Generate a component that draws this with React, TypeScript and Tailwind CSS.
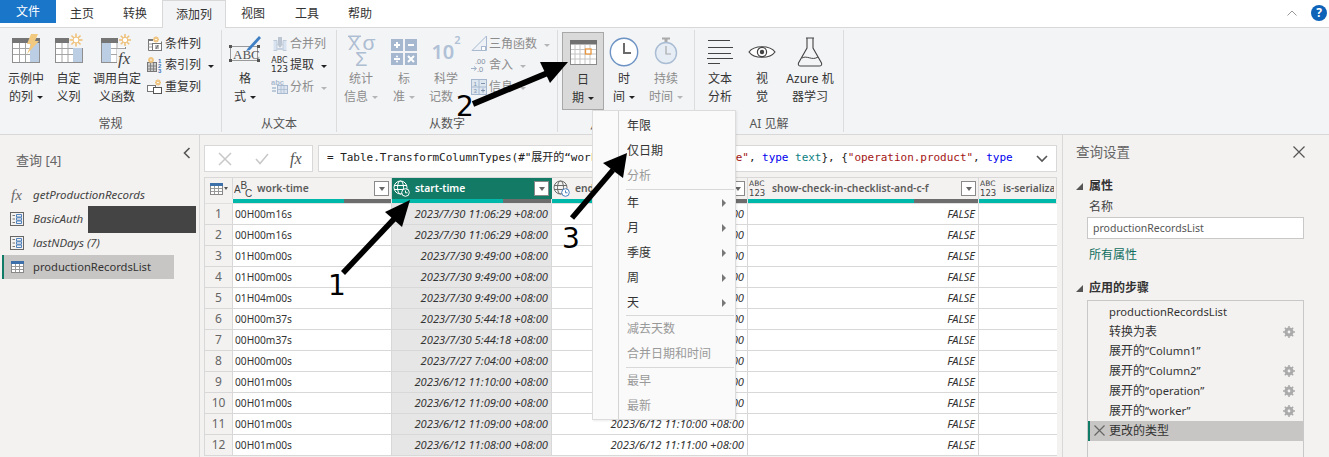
import type { FC, ReactNode } from "react";

const Caret: FC<{ light?: boolean }> = ({ light }) => (
  <span
    className={`inline-block ml-[4px] align-middle border-x-[3px] border-t-[3px] border-x-transparent ${
      light ? "border-t-[#b5b5b5]" : "border-t-[#222]"
    }`}
  />
);

const Sun: FC<{ cx: number; cy: number; r?: number }> = ({ cx, cy, r = 6 }) => (
  <g stroke="#efc27a" strokeWidth="1.6">
    <line x1={cx - r} y1={cy} x2={cx + r} y2={cy} />
    <line x1={cx} y1={cy - r} x2={cx} y2={cy + r} />
    <line x1={cx - r * 0.7} y1={cy - r * 0.7} x2={cx + r * 0.7} y2={cy + r * 0.7} />
    <line x1={cx - r * 0.7} y1={cy + r * 0.7} x2={cx + r * 0.7} y2={cy - r * 0.7} />
    <circle cx={cx} cy={cy} r={r * 0.45} fill="#fff" strokeWidth="1" />
  </g>
);

const ExampleIcon = () => (
  <svg width="32" height="32" viewBox="0 0 32 32" className="mb-[7px]">
    <rect x="2.5" y="6.5" width="27" height="24" fill="#fff" stroke="#8f8f8f" />
    <rect x="20" y="7" width="9" height="23" fill="#bccee4" />
    <rect x="2" y="6" width="28" height="5" fill="#757575" />
    <path d="M3 16.5H20M3 22.5H20M9.5 11V30M15.5 11V30" stroke="#a5a5a5" />
    <path d="M21 2L28 2L25 9L29 9L17 22L21 12L17 12Z" fill="#f1ca80" />
  </svg>
);

const CustomIcon = () => (
  <svg width="30" height="32" viewBox="0 0 30 32" className="mb-[7px]">
    <rect x="1.5" y="6.5" width="27" height="24" fill="#fff" stroke="#8f8f8f" />
    <rect x="19" y="7" width="9" height="23" fill="#bccee4" />
    <rect x="1" y="6" width="18" height="5" fill="#757575" />
    <path d="M2 16.5H19M2 22.5H19M8 11V30M14 11V30" stroke="#a5a5a5" />
    <rect x="15" y="1" width="15" height="15" fill="#f3f4f6" />
    <Sun cx={22} cy={8} r={6.5} />
  </svg>
);

const InvokeIcon = () => (
  <svg width="34" height="34" viewBox="0 0 34 34" className="mb-[5px] overflow-visible">
    <rect x="1.5" y="6.5" width="24" height="24" fill="#fff" stroke="#8f8f8f" />
    <rect x="2" y="11" width="9" height="19" fill="#bccee4" />
    <rect x="1" y="6" width="25" height="5" fill="#757575" />
    <path d="M11 16.5H25M11 22.5H25M17 11V30" stroke="#a5a5a5" />
    <rect x="18" y="1" width="15" height="14" fill="#f3f4f6" />
    <Sun cx={25} cy={8} r={6} />
    <rect x="17" y="17" width="17" height="17" fill="#f3f4f6" />
    <text x="18" y="32" fontFamily="Liberation Serif" fontStyle="italic" fontSize="17" fill="#444">
      fx
    </text>
  </svg>
);

const CondIcon = () => (
  <svg width="16" height="16" viewBox="0 0 16 16">
    <path d="M1.5 3.5V14.5H14.5V5.5" fill="#fff" stroke="#777" />
    <rect x="1" y="3" width="5" height="2" fill="#777" />
    <Sun cx={9} cy={3.5} r={3} />
    <rect x="5.5" y="7.5" width="9" height="7" fill="#fff" stroke="#777" />
    <path d="M8 10H12M8 12H12M11 9L9 13" stroke="#555" strokeWidth=".8" />
    <path d="M1.5 8H5M1.5 11H5" stroke="#999" />
  </svg>
);

const IndexIcon = () => (
  <svg width="18" height="18" viewBox="0 0 18 18">
    <rect x="1.5" y="6.5" width="9" height="9" fill="#ccc" stroke="#777" />
    <path d="M4.5 7V15M7.5 7V15M2 10H10M2 13H10" stroke="#777" strokeWidth=".8" />
    <Sun cx={5} cy={4} r={3} />
    <text x="12" y="7" fontSize="6" fontWeight="700" fill="#3e76ba" fontFamily="Liberation Sans">1</text>
    <text x="12" y="12" fontSize="6" fontWeight="700" fill="#3e76ba" fontFamily="Liberation Sans">2</text>
    <text x="12" y="17" fontSize="6" fontWeight="700" fill="#3e76ba" fontFamily="Liberation Sans">3</text>
  </svg>
);

const DupIcon = () => (
  <svg width="17" height="16" viewBox="0 0 17 16">
    <rect x="1.5" y="6.5" width="8" height="6" fill="#fff" stroke="#777" />
    <rect x="7.5" y="8.5" width="8" height="6" fill="#fff" stroke="#555" />
    <Sun cx={12} cy={3.5} r={3} />
  </svg>
);

const FormatIcon = () => (
  <svg width="34" height="28" viewBox="0 0 34 28" className="mb-[7px]">
    <rect x="2.5" y="12.5" width="27" height="14" fill="none" stroke="#999" />
    <path d="M1 11h3v3H1zM29 11h3v3h-3zM1 25h3v3H1zM29 25h3v3h-3z" fill="#555" />
    <text x="5" y="25" fontFamily="Liberation Serif" fontSize="13" fill="#555">
      ABC
    </text>
    <path d="M20 14L31 2L33 4L22 16L18 17Z" fill="#3f7fc4" />
  </svg>
);

const MergeIcon = () => (
  <svg width="16" height="16" viewBox="0 0 16 16">
    <path d="M1.5 4.5H5V14.5H1.5M14.5 4.5H11V14.5H14.5" fill="#d9e3ef" stroke="#bcc9d9" />
    <rect x="6" y="1" width="4" height="8" fill="#bcc6d2" />
    <path d="M5 8L8 12L11 8Z" fill="#bcc6d2" />
    <rect x="5" y="12" width="6" height="2" fill="#c5d1de" />
  </svg>
);

const ParseIcon = () => (
  <svg width="17" height="17" viewBox="0 0 17 17">
    <text x="0" y="7" fontSize="7.5" fill="#a9bad0" fontFamily="Liberation Sans" fontWeight="700">abc</text>
    <rect x="6.5" y="7.5" width="10" height="8" fill="#dbe4ef" stroke="#a9bad0" />
    <path d="M10 8V15M13 8V15M7 11.5H16" stroke="#a9bad0" strokeWidth=".8" />
    <path d="M1 10H5M1 13H5" stroke="#a9bad0" strokeWidth="1.5" />
  </svg>
);

const StatsIcon = () => (
  <svg width="30" height="32" viewBox="0 0 30 32" className="mb-[2px] ml-[1px] overflow-visible">
    <g fill="#adbdd2" fontFamily="Liberation Sans">
      <rect x="1" y="0.5" width="13" height="1.5" />
      <text x="1" y="15" fontSize="18">X</text>
      <text x="15.5" y="15" fontSize="21">σ</text>
      <text x="8" y="31" fontSize="20">Σ</text>
    </g>
  </svg>
);

const StdIcon = () => (
  <svg width="26" height="26" viewBox="0 0 26 26">
    <rect x="0" y="0" width="12" height="12" fill="#a6b8cf" />
    <rect x="14" y="0" width="12" height="12" fill="#a6b8cf" />
    <rect x="0" y="14" width="12" height="12" fill="#a6b8cf" />
    <rect x="14" y="14" width="12" height="12" fill="#a6b8cf" />
    <path d="M3 6H9M6 3V9M17 6H23M3 20H9M17 17L23 23M23 17L17 23" stroke="#fff" strokeWidth="2" />
    <circle cx="6" cy="17.5" r="1" fill="#fff" />
    <circle cx="6" cy="22.5" r="1" fill="#fff" />
  </svg>
);

const TrigIcon = () => (
  <svg width="16" height="17" viewBox="0 0 16 17">
    <path d="M1 15.5L15.5 1V15.5Z" fill="#eef1f5" stroke="#a9bad0" />
    <rect x="10.5" y="11.5" width="4" height="4" fill="#fff" stroke="#a9bad0" />
  </svg>
);

const RoundIcon = () => (
  <svg width="17" height="16" viewBox="0 0 17 16">
    <text x="5" y="7" fontSize="7.5" fill="#7f8ea3" fontFamily="Liberation Sans">.00</text>
    <text x="7" y="15" fontSize="7.5" fill="#7f8ea3" fontFamily="Liberation Sans">.0</text>
    <path d="M1 11.5H6M4 9.5L6.5 11.5L4 13.5" stroke="#9fb1c8" fill="none" />
  </svg>
);

const InfoIcon = () => (
  <svg width="16" height="16" viewBox="0 0 16 16">
    <rect x=".5" y=".5" width="15" height="15" fill="#dee6f0" stroke="#a6b8cf" />
    <path d="M8 1V15M1 8H15" stroke="#a6b8cf" />
    <path d="M10 4.5H14M10 11.5H14M12 9.5V13.5" stroke="#7f93ad" />
    <text x="2.5" y="7" fontSize="6" fill="#7f93ad" fontFamily="Liberation Sans">1</text>
    <text x="2.5" y="14" fontSize="6" fill="#7f93ad" fontFamily="Liberation Sans">3</text>
  </svg>
);

const DateIcon = () => (
  <svg width="27" height="25" viewBox="0 0 27 25">
    <rect x=".5" y=".5" width="26" height="24" fill="#fff" stroke="#8a8a8a" />
    <rect x="0" y="0" width="27" height="4.5" fill="#707070" />
    <path d="M5 5V24M10 5V24M15 5V24M20 5V24M1 9.5H26M1 14H26M1 19H26" stroke="#c4c4c4" />
    <rect x="15.5" y="9" width="5.5" height="5" fill="#fff" stroke="#e8963e" strokeWidth="1.3" />
  </svg>
);

const ClockIcon = () => (
  <svg width="30" height="30" viewBox="0 0 30 30">
    <circle cx="15" cy="15" r="13.7" fill="#fff" stroke="#6c93c4" strokeWidth="1.4" />
    <path d="M15 6V16H22" fill="none" stroke="#6b6b6b" strokeWidth="2" />
  </svg>
);

const StopwatchIcon = () => (
  <svg width="24" height="30" viewBox="0 0 24 30">
    <rect x="8" y="0.5" width="8" height="2" fill="#aaa" />
    <rect x="10.5" y="2" width="3" height="3" fill="#aaa" />
    <circle cx="12" cy="16" r="10.5" fill="#e6edf5" stroke="#a9bcd3" strokeWidth="1.4" />
    <path d="M12 9V17H17" fill="none" stroke="#a8a8a8" strokeWidth="1.2" />
  </svg>
);

const TextAnalyticsIcon = () => (
  <svg width="27" height="24" viewBox="0 0 27 24">
    <path d="M1 .5H23M1 7.5H26M1 13.5H24M0 18.5H26M1 23.5H13" stroke="#444" strokeWidth="1" />
  </svg>
);

const EyeIcon = () => (
  <svg width="28" height="16" viewBox="0 0 28 16">
    <path d="M1 8C6 1 22 1 27 8C22 15 6 15 1 8Z" fill="#fff" stroke="#444" strokeWidth="1.2" />
    <circle cx="14" cy="8" r="4.6" fill="#fff" stroke="#444" strokeWidth="1.2" />
    <circle cx="14" cy="8" r="2.2" fill="#444" />
  </svg>
);

const FlaskIcon = () => (
  <svg width="26" height="30" viewBox="0 0 26 30">
    <path d="M9 1H17M10 1V11L1.5 26C0.8 28 2 29 3.5 29H22.5C24 29 25.2 28 24.5 26L16 11V1" fill="none" stroke="#444" strokeWidth="1.1" />
    <path d="M5 21C10 18 15 24 21 20" fill="none" stroke="#444" strokeWidth="1" />
  </svg>
);

const RibbonBig: FC<{
  icon: ReactNode;
  lines: [string, string];
  disabled?: boolean;
  caret?: boolean;
  className: string;
  active?: boolean;
}> = ({ icon, lines, disabled, caret, className, active }) => (
  <div
    className={`flex flex-col items-center shrink-0 h-[78px] ${className} ${
      active ? "bg-[#d9d9d9] border border-[#a8a8a8]" : ""
    }`}
  >
    <div className={`flex items-center justify-center h-[37px] ${active ? "mt-[1px]" : "mt-[2px]"}`}>{icon}</div>
    <div
      className={`text-center text-[12px] leading-[18px] whitespace-nowrap ${
        disabled ? "text-[#8c8c8c]" : "text-[#333]"
      }`}
    >
      <div>{lines[0]}</div>
      <div>
        {lines[1]}
        {caret && <Caret light={disabled} />}
      </div>
    </div>
  </div>
);

const RibbonSmall: FC<{ icon: ReactNode; label: string; disabled?: boolean; caret?: boolean }> = ({
  icon,
  label,
  disabled,
  caret,
}) => (
  <div className="flex items-center h-[21.5px] whitespace-nowrap">
    <div className="w-[19px] flex justify-center shrink-0">{icon}</div>
    <span className={`ml-[1px] text-[12px] ${disabled ? "text-[#8c8c8c]" : "text-[#333]"}`}>{label}</span>
    {caret && <span className="ml-[3px]"><Caret light={disabled} /></span>}
  </div>
);

const RibbonGroup: FC<{ label: string; className: string; children: ReactNode }> = ({
  label,
  className,
  children,
}) => (
  <div className={`flex flex-col shrink-0 border-r border-[#dcdcdc] h-[102px] mt-[2px] ${className}`}>
    <div className="flex h-[80px] pt-[1px]">{children}</div>
    <div className="text-center text-[12px] text-[#555] leading-[18px] mt-[6px]">{label}</div>
  </div>
);

const Ribbon = () => (
  <div className="flex h-[107px] bg-[#f3f4f6] border-b border-[#d8d8d8]">
    <RibbonGroup label="常规" className="w-[222px]">
      <RibbonBig className="w-[44px] ml-[4px]" icon={<ExampleIcon />} lines={["示例中", "的列"]} caret />
      <RibbonBig className="w-[41px]" icon={<CustomIcon />} lines={["自定", "义列"]} />
      <RibbonBig className="w-[56px]" icon={<InvokeIcon />} lines={["调用自定", "义函数"]} />
      <div className="flex flex-col pt-[2px]">
        <RibbonSmall icon={<CondIcon />} label="条件列" />
        <RibbonSmall icon={<IndexIcon />} label="索引列" caret />
        <RibbonSmall icon={<DupIcon />} label="重复列" />
      </div>
    </RibbonGroup>
    <RibbonGroup label="从文本" className="w-[115px]">
      <RibbonBig className="w-[46px]" icon={<FormatIcon />} lines={["格", "式"]} caret />
      <div className="flex flex-col ml-[2px] pt-[2px]">
        <RibbonSmall icon={<MergeIcon />} label="合并列" disabled />
        <RibbonSmall
          icon={
            <div className="text-[9px] leading-[9px] text-[#333] text-center font-['DejaVu_Sans',sans-serif]">
              <div className="text-[8px]">ABC</div>
              <div>123</div>
            </div>
          }
          label="提取"
          caret
        />
        <RibbonSmall icon={<ParseIcon />} label="分析" disabled caret />
      </div>
    </RibbonGroup>
    <RibbonGroup label="从数字" className="w-[221px]">
      <RibbonBig className="w-[44px] ml-[2px]" icon={<StatsIcon />} lines={["统计", "信息"]} disabled caret />
      <RibbonBig className="w-[42px]" icon={<StdIcon />} lines={["标", "准"]} disabled caret />
      <RibbonBig
        className="w-[42px]"
        icon={
          <div className="text-[20px] font-semibold text-[#b0c1d6] leading-none">
            10<sup className="text-[11px] align-[9px]">2</sup>
          </div>
        }
        lines={["科学", "记数"]}
        disabled
        caret
      />
      <div className="flex flex-col pt-[2px] ml-[2px]">
        <RibbonSmall icon={<TrigIcon />} label="三角函数" disabled caret />
        <RibbonSmall icon={<RoundIcon />} label="舍入" disabled caret />
        <RibbonSmall icon={<InfoIcon />} label="信息" disabled caret />
      </div>
    </RibbonGroup>
    <RibbonGroup label="从日期和时间" className="w-[137px]">
      <RibbonBig className="w-[42px] ml-[4px] mt-[1px]" icon={<DateIcon />} lines={["日", "期"]} caret active />
      <RibbonBig className="w-[40px]" icon={<ClockIcon />} lines={["时", "间"]} caret />
      <RibbonBig className="w-[44px]" icon={<StopwatchIcon />} lines={["持续", "时间"]} disabled caret />
    </RibbonGroup>
    <RibbonGroup label="AI 见解" className="w-[149px]">
      <RibbonBig className="w-[50px]" icon={<TextAnalyticsIcon />} lines={["文本", "分析"]} />
      <RibbonBig className="w-[34px]" icon={<EyeIcon />} lines={["视", "觉"]} />
      <RibbonBig className="w-[62px]" icon={<FlaskIcon />} lines={["Azure 机", "器学习"]} />
    </RibbonGroup>
  </div>
);

const TABS = [
  { label: "主页", w: "w-[52px]" },
  { label: "转换", w: "w-[54px]" },
  { label: "添加列", w: "w-[64px]", active: true },
  { label: "视图", w: "w-[54px]" },
  { label: "工具", w: "w-[54px]" },
  { label: "帮助", w: "w-[52px]" },
];

const TabBar = () => (
  <div className="flex h-[28px] items-end bg-white border-b border-[#d8d8d8]">
    <div className="w-[56px] h-[23px] mb-[4px] bg-[#1a76c9] text-white text-[12px] leading-[23px] text-center">
      文件
    </div>
    {TABS.map((t) => (
      <div
        key={t.label}
        className={`${t.w} h-[27px] text-[12px] text-center leading-[27px] text-[#333] ${
          t.active ? "bg-[#f3f4f6] border-x border-t border-[#d8d8d8] mb-[-1px] h-[28px]" : ""
        }`}
      >
        {t.label}
      </div>
    ))}
    <div className="flex-1 flex items-center justify-end h-[27px] pr-[2px] gap-[14px] pb-[1px]">
      <svg width="10" height="6" viewBox="0 0 10 6">
        <path d="M.5 5.5L5 1L9.5 5.5" fill="none" stroke="#999" />
      </svg>
      <div className="w-[16px] h-[16px] rounded-full bg-[#0e62b8] text-white text-[12px] font-bold leading-[16px] text-center">
        ?
      </div>
    </div>
  </div>
);

const MiniTable: FC = () => (
  <svg width="13" height="12" viewBox="0 0 13 12">
    <rect x=".5" y=".5" width="12" height="11" fill="#fff" stroke="#888" />
    <rect x="0" y="0" width="13" height="3" fill="#3d6fa8" />
    <path d="M4.5 3V11M8.5 3V11M1 5.5H12M1 8.5H12" stroke="#999" />
  </svg>
);

const ParamIcon = () => (
  <svg width="14" height="14" viewBox="0 0 14 14">
    <rect x=".5" y=".5" width="13" height="13" fill="none" stroke="#666" />
    <path d="M2.5 3.5H5M2.5 7H5M2.5 10.5H5" stroke="#777" />
    <path d="M6.5 2.5H11.5V5H6.5ZM6.5 5.8H11.5V8.2H6.5ZM6.5 9H11.5V11.5H6.5Z" fill="none" stroke="#3d76b8" strokeWidth=".9" />
  </svg>
);

const QUERIES = [
  { label: "getProductionRecords", icon: <span className="font-['Liberation_Serif',serif] italic text-[15px] text-[#666]">fx</span> },
  { label: "BasicAuth", icon: <ParamIcon />, masked: true },
  { label: "lastNDays (7)", icon: <ParamIcon /> },
];

const QueryPanel = () => (
  <div className="w-[200px] shrink-0 border-r border-[#d8d8d8] pt-[13px]">
    <div className="flex items-center justify-between pl-[16px] pr-[8px] h-[26px]">
      <span className="text-[13px] text-[#666]">查询 [4]</span>
      <svg width="8" height="12" viewBox="0 0 8 12" className="mb-[16px]">
        <path d="M6.5 1L1.5 6L6.5 11" fill="none" stroke="#555" strokeWidth="1.6" />
      </svg>
    </div>
    <div className="mt-[9px]">
      {QUERIES.map((q) => (
        <div key={q.label} className="flex items-center h-[24px] pl-[2px] w-[196px]">
          <div className="w-[31px] flex justify-center pr-[2px]">{q.icon}</div>
          <span className="italic text-[11.5px] text-[#444] whitespace-nowrap">{q.label}</span>
          {q.masked && <div className="ml-auto w-[108px] h-[27px] shrink-0 bg-[#444]" />}
        </div>
      ))}
      <div className="flex items-center h-[24px] w-[172px] ml-[2px] bg-[#c8c6c4] border-l-[2px] border-[#107c68]">
        <div className="w-[29px] flex justify-center pr-[2px]">
          <MiniTable />
        </div>
        <span className="text-[11.2px] text-[#333] whitespace-nowrap">productionRecordsList</span>
      </div>
    </div>
  </div>
);

const FormulaBar = () => (
  <div className="flex gap-[5px] h-[27px] mr-[5px]">
    <div className="flex items-center w-[109px] bg-white border border-[#d8d8d8] shrink-0 pl-[13px] gap-[23px]">
      <svg width="14" height="14" viewBox="0 0 14 14">
        <path d="M1 1L13 13M13 1L1 13" stroke="#c8c8c8" strokeWidth="1.5" />
      </svg>
      <svg width="14" height="12" viewBox="0 0 14 12">
        <path d="M1 6L5 10.5L13 1" fill="none" stroke="#c8c8c8" strokeWidth="1.5" />
      </svg>
      <span className="font-['Liberation_Serif',serif] italic text-[16px] text-[#555] ml-[-2px]">fx</span>
    </div>
    <div className="flex-1 flex items-center bg-white border border-[#d8d8d8] pl-[8px] pr-[8px] min-w-0">
      <div className="flex-1 overflow-hidden whitespace-nowrap font-['DejaVu_Sans_Mono','Noto_Sans_CJK_SC',monospace] text-[11px] tracking-[-0.03px] text-[#222]">
        = Table.TransformColumnTypes(#"展开的“worker"", {"{{"}"worker.idCo<span className="text-[#a31515]">de"</span>, <span className="text-[#0000ee]">type</span>{" "}
        <span className="text-[#0a7f7f]">text</span>{"}"}, {"{"}<span className="text-[#a31515]">"operation.product"</span>, <span className="text-[#0000ee]">type</span>
      </div>
      <svg width="12" height="8" viewBox="0 0 12 8" className="shrink-0 ml-[4px]">
        <path d="M1 1L6 6L11 1" fill="none" stroke="#555" strokeWidth="1.6" />
      </svg>
    </div>
  </div>
);

const FilterBtn: FC = () => (
  <div className="w-[15px] h-[15px] shrink-0 bg-white border border-[#8a8a8a] flex items-center justify-center">
    <span className="border-x-[3.5px] border-t-[4px] border-x-transparent border-t-[#666]" />
  </div>
);

const AbcIcon = () => (
  <div className="w-[18px] text-[8.5px] leading-[8.5px] text-[#444] font-['DejaVu_Sans',sans-serif] shrink-0">
    <div className="text-[7.5px]">ABC</div>
    <div>123</div>
  </div>
);

const TextTypeIcon = () => (
  <svg width="18" height="18" viewBox="0 0 18 18" className="shrink-0">
    <g fill="#444" fontFamily="Liberation Sans" fontSize="10">
      <text x="0" y="13">A</text>
      <text x="6.5" y="8.5">B</text>
      <text x="11" y="17">C</text>
    </g>
  </svg>
);

const GlobeIcon: FC<{ light?: boolean }> = ({ light }) => {
  const c = light ? "#fff" : "#6b6b6b";
  return (
    <svg width="17" height="17" viewBox="0 0 17 17" className="shrink-0">
      <circle cx="7.5" cy="7.5" r="6.5" fill="none" stroke={c} />
      <ellipse cx="7.5" cy="7.5" rx="3" ry="6.5" fill="none" stroke={c} />
      <path d="M1 5.5H14M1 9.5H14" stroke={c} />
      <circle cx="12.5" cy="12.5" r="3.8" fill={light ? "#137a66" : "#fff"} stroke={light ? "#fff" : "#4c82c0"} />
      <path d="M12.5 10.5V12.8H14.5" fill="none" stroke={light ? "#fff" : "#4c82c0"} />
    </svg>
  );
};

const COLUMNS = [
  { name: "work-time", w: "w-[159px]", icon: <TextTypeIcon />, split: "w-[70%]" },
  { name: "start-time", w: "w-[160px]", icon: <GlobeIcon light />, split: "w-[70%]", active: true },
  { name: "end-time", w: "w-[196px]", icon: <GlobeIcon />, split: "w-[75%]" },
  { name: "show-check-in-checklist-and-c-f", w: "w-[231px]", icon: <AbcIcon />, split: "w-[72%]" },
  { name: "is-serializable", w: "w-[78px]", icon: <AbcIcon />, split: "w-full", clip: true },
];

const ROWS = [
  ["00H00m16s", "2023/7/30 11:06:29 +08:00", "2023/7/30 11:06:45 +08:00"],
  ["00H00m16s", "2023/7/30 11:06:29 +08:00", "2023/7/30 11:06:45 +08:00"],
  ["01H00m00s", "2023/7/30 9:49:00 +08:00", "2023/7/30 10:49:00 +08:00"],
  ["01H00m00s", "2023/7/30 9:49:00 +08:00", "2023/7/30 10:49:00 +08:00"],
  ["01H04m00s", "2023/7/30 9:49:00 +08:00", "2023/7/30 10:53:00 +08:00"],
  ["00H00m37s", "2023/7/30 5:44:18 +08:00", "2023/7/30 5:44:55 +08:00"],
  ["00H00m37s", "2023/7/30 5:44:18 +08:00", "2023/7/30 5:44:55 +08:00"],
  ["00H00m00s", "2023/7/27 7:04:00 +08:00", "2023/7/27 7:04:00 +08:00"],
  ["00H01m00s", "2023/6/12 11:10:00 +08:00", "2023/6/12 11:11:00 +08:00"],
  ["00H01m00s", "2023/6/12 11:09:00 +08:00", "2023/6/12 11:10:00 +08:00"],
  ["00H01m00s", "2023/6/12 11:09:00 +08:00", "2023/6/12 11:10:00 +08:00"],
  ["00H01m00s", "2023/6/12 11:08:00 +08:00", "2023/6/12 11:11:00 +08:00"],
];

const DataTable = () => (
  <div className="mt-[5px] mr-[5px] border-l border-[#d8d8d8]">
    <div className="flex h-[22px] bg-[#f3f2f1] border-t border-[#d8d8d8]">
      <div className="w-[28px] shrink-0 flex items-center justify-center border-r border-[#d8d8d8] gap-[1px]">
        <MiniTable />
        <span className="border-x-[2.5px] border-t-[3px] border-x-transparent border-t-[#555]" />
      </div>
      {COLUMNS.map((c) => (
        <div
          key={c.name}
          className={`${c.w} shrink-0 flex items-center pl-[1px] pr-[2px] border-r overflow-hidden ${
            c.active ? "bg-[#137a66] border-[#137a66]" : "border-[#d8d8d8]"
          }`}
        >
          {c.icon}
          <span
            className={`ml-[5px] text-[10.3px] font-semibold whitespace-nowrap flex-1 overflow-hidden ${
              c.active ? "text-white" : "text-[#5c5c5c]"
            }`}
          >
            {c.name}
          </span>
          {!c.clip && <FilterBtn />}
        </div>
      ))}
    </div>
    <div className="flex h-[5px] bg-white border-b border-[#e0e0e0]">
      <div className="w-[28px] shrink-0 bg-[#f3f2f1]" />
      {COLUMNS.map((c) => (
        <div key={c.name} className={`${c.w} shrink-0 flex h-[4px] bg-[#6d6d6d] border-r border-[#e8e8e8]`}>
          <div className={`${c.split} bg-[#00b8a9]`} />
        </div>
      ))}
    </div>
    {ROWS.map((r, i) => (
      <div key={i} className="flex h-[21px] text-[#333] border-b border-[#d8d8d8] bg-white">
        <div className="w-[28px] shrink-0 bg-[#f3f2f1] border-r border-[#d8d8d8] text-[#666] text-[12px] text-center leading-[20px]">
          {i + 1}
        </div>
        <div className="w-[159px] shrink-0 pl-[2px] text-[10.2px] leading-[20px] border-r border-[#d8d8d8]">{r[0]}</div>
        <div className="w-[160px] shrink-0 pr-[3px] text-[11.2px] leading-[20px] text-right italic bg-[#e6e6e6] border-r border-[#d8d8d8]">
          {r[1]}
        </div>
        <div className="w-[196px] shrink-0 pr-[3px] text-[11.2px] leading-[20px] text-right italic border-r border-[#d8d8d8]">{r[2]}</div>
        <div className="w-[231px] shrink-0 pr-[3px] text-[11px] leading-[20px] text-right italic border-r border-[#d8d8d8]">FALSE</div>
        <div className="w-[78px] shrink-0" />
      </div>
    ))}
  </div>
);

const Triangle = () => (
  <svg width="7" height="7" viewBox="0 0 7 7" className="shrink-0">
    <path d="M7 0V7H0Z" fill="#555" />
  </svg>
);

const Gear = () => (
  <svg width="12" height="12" viewBox="0 0 12 12">
    <circle cx="6" cy="6" r="3.4" fill="none" stroke="#aaa" strokeWidth="2.2" />
    <path d="M6 0V12M0 6H12M1.8 1.8L10.2 10.2M10.2 1.8L1.8 10.2" stroke="#aaa" strokeWidth="1.5" />
    <circle cx="6" cy="6" r="1.4" fill="#f3f2f1" />
  </svg>
);

const STEPS = [
  { latin: "productionRecordsList" },
  { cn: "转换为表", gear: true },
  { cn: "展开的", latin: "“Column1”" },
  { cn: "展开的", latin: "“Column2”", gear: true },
  { cn: "展开的", latin: "“operation”", gear: true },
  { cn: "展开的", latin: "“worker”", gear: true },
];

const SettingsPanel = () => (
  <div className="flex-1 border-l border-[#d8d8d8] min-w-0 pl-[13px]">
    <div className="flex items-center justify-between h-[34px] pr-[24px]">
      <span className="text-[13.5px] text-[#666]">查询设置</span>
      <svg width="12" height="12" viewBox="0 0 12 12">
        <path d="M.5 .5L11.5 11.5M11.5 .5L.5 11.5" stroke="#555" strokeWidth="1.2" />
      </svg>
    </div>
    <div className="flex items-center gap-[6px] h-[20px] mt-[7px]">
      <Triangle />
      <span className="text-[12px] font-semibold text-[#333]">属性</span>
    </div>
    <div className="pl-[11px]">
      <div className="text-[12px] leading-[20px] text-[#444] mt-[1px] ml-[2px]">名称</div>
      <div className="w-[217px] h-[22px] bg-white border border-[#c8c8c8] text-[10.5px] leading-[20px] pl-[5px] text-[#555]">
        productionRecordsList
      </div>
      <div className="text-[12px] text-[#0f6e5e] leading-[18px] mt-[7px] ml-[2px]">所有属性</div>
    </div>
    <div className="flex items-center gap-[6px] h-[20px] mt-[14px]">
      <Triangle />
      <span className="text-[12px] font-semibold text-[#333]">应用的步骤</span>
    </div>
    <div className="ml-[11px] mt-[2px] w-[217px] h-[200px] border border-[#c8c8c8] pt-[1px]">
      {STEPS.map((s) => (
        <div
          key={`${s.cn ?? ""}${s.latin ?? ""}`}
          className="flex items-center h-[19.8px] pl-[21px] pr-[8px] justify-between text-[12px] text-[#333] whitespace-nowrap"
        >
          <span>
            {s.cn}
            <span className="text-[11.2px]">{s.latin}</span>
          </span>
          {s.gear && <Gear />}
        </div>
      ))}
      <div className="flex items-center h-[20px] bg-[#c8c6c4] border-l-[2px] border-[#107c68] text-[12px] text-[#333]">
        <svg width="11" height="11" viewBox="0 0 11 11" className="ml-[4px] mr-[4px]">
          <path d="M.5 .5L10.5 10.5M10.5 .5L.5 10.5" stroke="#666" strokeWidth="1.2" />
        </svg>
        更改的类型
      </div>
    </div>
  </div>
);

const MenuItem: FC<{ label: string; disabled?: boolean; sub?: boolean }> = ({ label, disabled, sub }) => (
  <div
    className={`flex items-center justify-between h-[25px] pl-[8px] pr-[9px] text-[12px] ${
      disabled ? "text-[#999]" : "text-[#333]"
    }`}
  >
    <span>{label}</span>
    {sub && <span className="border-y-[4px] border-l-[4px] border-y-transparent border-l-[#777]" />}
  </div>
);

const MenuSep: FC<{ className: string }> = ({ className }) => (
  <div className={`flex items-center ml-[7px] mr-[1px] ${className}`}>
    <div className="h-px w-full bg-[#d8d8d8]" />
  </div>
);

const DateMenu = () => (
  <div className="absolute left-[592px] top-[110px] w-[144px] h-[310px] flex bg-[#fafafa] border border-[#dcdcdc] shadow-[1px_1px_2px_rgba(0,0,0,0.08)]">
    <div className="w-[26px] shrink-0 border-r border-[#d4d4d4]" />
    <div className="flex-1 pt-[2px]">
      <MenuItem label="年限" />
      <MenuItem label="仅日期" />
      <MenuItem label="分析" disabled />
      <MenuSep className="h-[2px]" />
      <MenuItem label="年" sub />
      <MenuItem label="月" sub />
      <MenuItem label="季度" sub />
      <MenuItem label="周" sub />
      <MenuItem label="天" sub />
      <MenuSep className="h-px" />
      <MenuItem label="减去天数" disabled />
      <MenuItem label="合并日期和时间" disabled />
      <MenuSep className="h-[2px]" />
      <MenuItem label="最早" disabled />
      <MenuItem label="最新" disabled />
    </div>
  </div>
);

const Arrows = () => (
  <svg width="1329" height="457" viewBox="0 0 1329 457" className="absolute left-0 top-0 pointer-events-none">
    <line x1="343" y1="273" x2="394" y2="219" stroke="#000" strokeWidth="5.5" />
    <polygon points="410,200 385,212 402,227" fill="#000" />
    <line x1="473" y1="104" x2="550" y2="72" stroke="#000" strokeWidth="6" />
    <polygon points="568,62 540,62 550,83" fill="#000" />
    <line x1="572" y1="218" x2="613" y2="170" stroke="#000" strokeWidth="5.5" />
    <polygon points="627,153 603,163 623,178" fill="#000" />
  </svg>
);

const CalloutNumber: FC<{ className: string; value: string }> = ({ className, value }) => (
  <span className={`absolute text-[28px] leading-none text-black font-['DejaVu_Sans',sans-serif] ${className}`}>{value}</span>
);

const App: FC = () => {
  return (
    <div className="relative w-[1329px] h-[457px] overflow-hidden bg-[#f3f2f1] font-['Noto_Sans','Noto_Sans_CJK_SC',sans-serif]">
      <TabBar />
      <Ribbon />
      <div className="flex h-[322px] overflow-hidden">
        <QueryPanel />
        <div className="w-[862px] shrink-0 pl-[4px] pt-[10px]">
          <FormulaBar />
          <DataTable />
        </div>
        <SettingsPanel />
      </div>
      <DateMenu />
      <Arrows />
      <CalloutNumber className="left-[328px] top-[272px]" value="1" />
      <CalloutNumber className="left-[456px] top-[93px]" value="2" />
      <CalloutNumber className="left-[562px] top-[225px]" value="3" />
    </div>
  );
};

export default App;
